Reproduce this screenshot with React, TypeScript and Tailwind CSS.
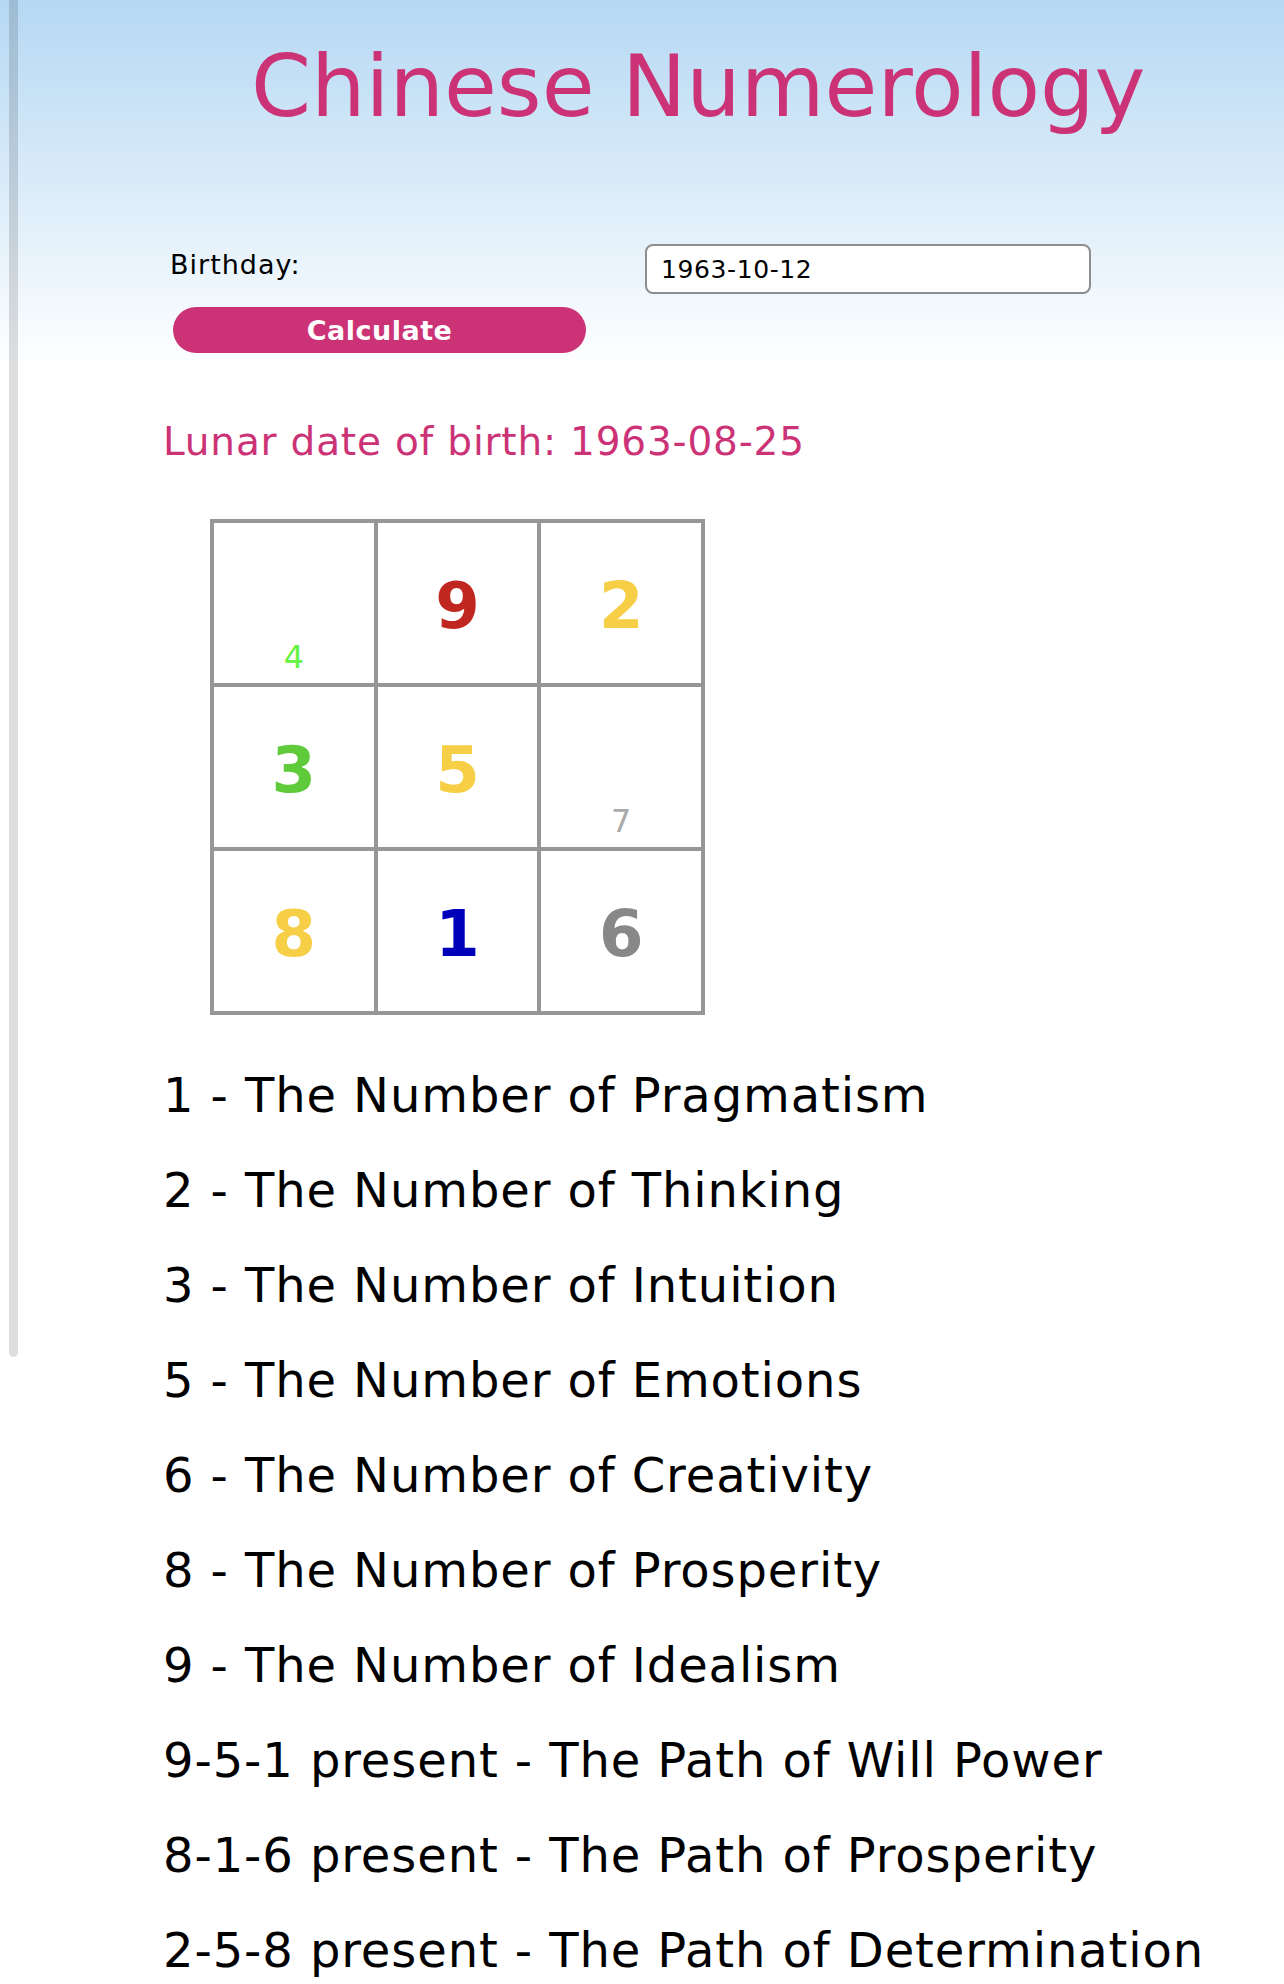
import React from "react";

type Cell = { n: number; big: boolean; color: string };

// lo shu square, top row first
const grid: Cell[] = [
  { n: 4, big: false, color: "text-[#66f244]" },
  { n: 9, big: true, color: "text-[#bf2720]" },
  { n: 2, big: true, color: "text-[#f6cf46]" },
  { n: 3, big: true, color: "text-[#5fcb3b]" },
  { n: 5, big: true, color: "text-[#f6cf46]" },
  { n: 7, big: false, color: "text-[#aaaaaa]" },
  { n: 8, big: true, color: "text-[#f6cf46]" },
  { n: 1, big: true, color: "text-[#0000bb]" },
  { n: 6, big: true, color: "text-[#888888]" },
];

const meanings = [
  "1 - The Number of Pragmatism",
  "2 - The Number of Thinking",
  "3 - The Number of Intuition",
  "5 - The Number of Emotions",
  "6 - The Number of Creativity",
  "8 - The Number of Prosperity",
  "9 - The Number of Idealism",
  "9-5-1 present - The Path of Will Power",
  "8-1-6 present - The Path of Prosperity",
  "2-5-8 present - The Path of Determination",
];

export default function App() {
  return (
    <div className="relative min-h-screen overflow-hidden bg-[linear-gradient(to_bottom,#b5d8f3,#ffffff_370px)] font-['DejaVu_Sans',sans-serif] text-black">
      {/* scroll track on the left edge */}
      <div className="absolute left-[9px] top-0 h-[1357px] w-[9px] rounded-b-full bg-black/[0.13]" />

      <h1 className="pl-[251px] pt-[36px] text-[86px] font-normal leading-[100px] whitespace-nowrap text-[#cc3377]">
        Chinese Numerology
      </h1>

      <div className="pl-[170px]">
        <div className="mt-[108px] flex items-start">
          <label className="w-[475px] pt-[5px] text-[27px] leading-[32px] tracking-[1px]">Birthday:</label>
          <input
            defaultValue="1963-10-12"
            className="h-[50px] w-[446px] rounded-lg border-2 border-[#8e8e8e] bg-white pl-[14px] text-[25px] tracking-[0.6px] text-black outline-none"
          />
        </div>
        <button className="mt-[13px] ml-[3px] h-[46px] w-[413px] rounded-full bg-[#cc3377] pt-[3px] text-[27px] font-bold tracking-[0.5px] text-white">
          Calculate
        </button>
      </div>

      <div className="pl-[163px]">
        <p className="mt-[65px] text-[39px] leading-[48px] tracking-[0.8px] text-[#cc3377]">Lunar date of birth: 1963-08-25</p>

        <div className="mt-[53px] ml-[47px] grid w-[495px] grid-cols-3 border-l-4 border-t-4 border-[#969696]">
          {grid.map((c) => (
            <div
              key={c.n}
              className={
                c.big
                  ? "flex h-[164px] items-center justify-center border-b-4 border-r-4 border-[#969696] pt-[5px]"
                  : "flex h-[164px] items-end justify-center border-b-4 border-r-4 border-[#969696] pb-[10px]"
              }
            >
              {c.big ? (
                <span className={`text-[64px] font-bold leading-none ${c.color}`}>{c.n}</span>
              ) : (
                <span className={`text-[32px] leading-none ${c.color}`}>{c.n}</span>
              )}
            </div>
          ))}
        </div>

        <div className="mt-[33px]">
          {meanings.map((m) => (
            <p key={m} className="text-[48px] leading-[95px] tracking-[0.9px] whitespace-nowrap">
              {m}
            </p>
          ))}
        </div>
      </div>
    </div>
  );
}
